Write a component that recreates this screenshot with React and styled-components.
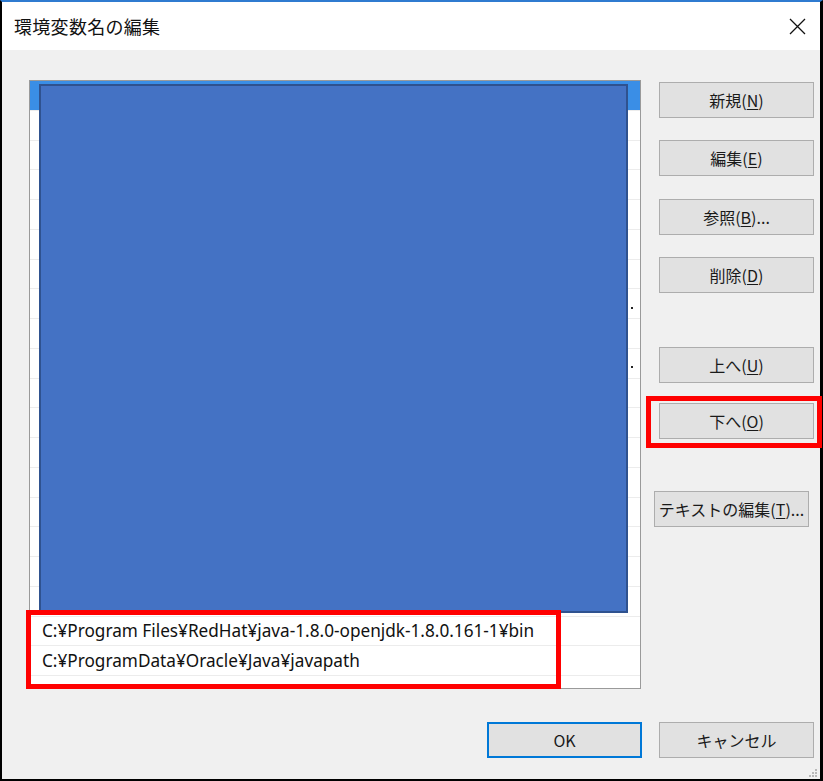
import styled, { createGlobalStyle } from "styled-components";

const GlobalStyle = createGlobalStyle`
  html, body {
    margin: 0;
    padding: 0;
    background: #000;
  }
  #root {
    width: 823px;
    height: 781px;
  }
`;

const Frame = styled.div`
  box-sizing: border-box;
  width: 823px;
  height: 781px;
  border-top: 2px solid #2f7bd0;
  border-left: 2px solid #000;
  border-right: 3px solid #000;
  border-bottom: 2px solid #000;
  display: flex;
  flex-direction: column;
  font-family: "Noto Sans CJK JP", "Noto Sans", sans-serif;
`;

const TitleBar = styled.div`
  height: 48px;
  background: #fff;
  display: flex;
  align-items: center;
  justify-content: space-between;
  padding: 0 14px 0 12px;
`;

const Title = styled.span`
  font-size: 18px;
  color: #111;
  letter-spacing: 0.3px;
`;

const CloseBtn = styled.div`
  width: 18px;
  height: 18px;
  display: flex;
  align-items: center;
  justify-content: center;
`;

const Body = styled.div`
  position: relative;
  flex: 1;
  background: #f0f0f0;
  padding: 30px 6px 0 27px;
  display: flex;
  flex-direction: column;
`;

const Main = styled.div`
  display: flex;
  gap: 18px;
`;

const ListBox = styled.div`
  position: relative;
  box-sizing: border-box;
  width: 612px;
  height: 609px;
  background: #fff;
  border: 1px solid #9a9a9a;
`;

const Row = styled.div`
  box-sizing: border-box;
  height: 29.75px;
  border-bottom: 1px solid #ececec;
  padding-left: 12px;
  display: flex;
  align-items: center;
  font-family: "Noto Sans", "Noto Sans CJK JP", sans-serif;
  font-size: 17.2px;
  color: #111;
  white-space: nowrap;
  background: ${(p) => (p.$selected ? "#3a8ee6" : "transparent")};
`;

const Dot = styled.span`
  width: 2px;
  height: 2px;
  background: #222;
  margin: 8px 0 0 589px;
`;

const Cover = styled.div`
  position: absolute;
  left: 9px;
  top: 3px;
  width: 589px;
  height: 529px;
  box-sizing: border-box;
  background: #4472c4;
  border: 2px solid #2f528f;
`;

const RedMark = styled.div`
  position: absolute;
  box-sizing: border-box;
  border: 5px solid #ff0000;
  pointer-events: none;
`;

const PathMark = styled(RedMark)`
  left: -4px;
  top: 529px;
  width: 535px;
  height: 79px;
`;

const ButtonColumn = styled.div`
  display: flex;
  flex-direction: column;
  padding-top: 2px;
`;

const Slot = styled.div`
  position: relative;
  margin-top: ${(p) => p.$gap || 0}px;
  margin-left: ${(p) => p.$shift || 0}px;
`;

const Button = styled.button`
  box-sizing: border-box;
  width: 155px;
  height: 36px;
  background: #e1e1e1;
  border: ${(p) => (p.$default ? "2px solid #0078d7" : "1px solid #adadad")};
  border-radius: 0;
  font-family: "Noto Sans CJK JP", "Noto Sans", sans-serif;
  font-size: 16px;
  color: #1a1a1a;
  padding: 0;
  display: flex;
  align-items: center;
  justify-content: center;
  cursor: default;

  u {
    text-underline-offset: 2px;
  }
`;

const ButtonMark = styled(RedMark)`
  left: -13px;
  top: -7px;
  width: 176px;
  height: 52px;
`;

const Footer = styled.div`
  display: flex;
  justify-content: flex-end;
  gap: 17px;
  margin-top: 33px;
`;

const Grip = styled.svg`
  position: absolute;
  right: 2px;
  bottom: 1px;
`;

const paths = [
  "C:¥Program Files¥RedHat¥java-1.8.0-openjdk-1.8.0.161-1¥bin",
  "C:¥ProgramData¥Oracle¥Java¥javapath",
];

const Label = ({ text, keyChar, tail = "" }) => (
  <span>
    {text}(<u>{keyChar}</u>){tail}
  </span>
);

const App = () => {
  const rows = Array.from({ length: 20 }, (_, i) => i);
  return (
    <>
      <GlobalStyle />
      <Frame>
        <TitleBar>
          <Title>環境変数名の編集</Title>
          <CloseBtn>
            <svg width="17" height="17" viewBox="0 0 17 17">
              <path d="M1 1 L16 16 M16 1 L1 16" stroke="#111" strokeWidth="1.3" />
            </svg>
          </CloseBtn>
        </TitleBar>
        <Body>
          <Main>
            <ListBox>
              {rows.map((i) => (
                <Row key={i} $selected={i === 0}>
                  {i === 18 && paths[0]}
                  {i === 19 && paths[1]}
                  {(i === 7 || i === 9) && <Dot />}
                </Row>
              ))}
              <Cover />
              <PathMark />
            </ListBox>
            <ButtonColumn>
              <Slot>
                <Button><Label text="新規" keyChar="N" /></Button>
              </Slot>
              <Slot $gap={22}>
                <Button><Label text="編集" keyChar="E" /></Button>
              </Slot>
              <Slot $gap={23}>
                <Button><Label text="参照" keyChar="B" tail="..." /></Button>
              </Slot>
              <Slot $gap={22}>
                <Button><Label text="削除" keyChar="D" /></Button>
              </Slot>
              <Slot $gap={54}>
                <Button><Label text="上へ" keyChar="U" /></Button>
              </Slot>
              <Slot $gap={20}>
                <Button><Label text="下へ" keyChar="O" /></Button>
                <ButtonMark />
              </Slot>
              <Slot $gap={52} $shift={-5}>
                <Button><Label text="テキストの編集" keyChar="T" tail="..." /></Button>
              </Slot>
            </ButtonColumn>
          </Main>
          <Footer>
            <Button $default>OK</Button>
            <Button>キャンセル</Button>
          </Footer>
          <Grip width="10" height="10" viewBox="0 0 10 10">
            <rect x="7" y="1" width="2" height="2" fill="#b8b8b8" />
            <rect x="4" y="4" width="2" height="2" fill="#b8b8b8" />
            <rect x="7" y="4" width="2" height="2" fill="#b8b8b8" />
            <rect x="1" y="7" width="2" height="2" fill="#b8b8b8" />
            <rect x="4" y="7" width="2" height="2" fill="#b8b8b8" />
            <rect x="7" y="7" width="2" height="2" fill="#b8b8b8" />
          </Grip>
        </Body>
      </Frame>
    </>
  );
};

export default App;
